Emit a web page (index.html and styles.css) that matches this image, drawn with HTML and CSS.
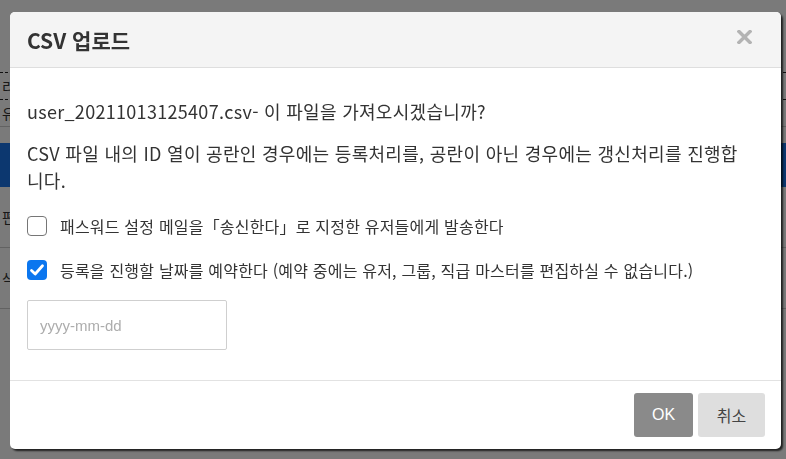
FILE: index.html
```html
<!DOCTYPE html>
<html lang="ko">
<head>
    <meta charset="UTF-8">
    <meta name="viewport" content="width=device-width, initial-scale=1.0">
    <title>CSV 업로드</title>
    <link rel="stylesheet" href="styles.css">
</head>
<body>
    <div class="page">
        <div class="page-row page-row-dashed">리스트</div>
        <div class="page-row">유저</div>
        <div class="page-bar"></div>
        <div class="page-row page-row-tall">편집</div>
        <div class="page-row page-row-tall">삭제</div>
    </div>

    <div class="backdrop">
        <div class="modal">
            <div class="modal-header">
                <h2 class="modal-title">CSV 업로드</h2>
                <button class="modal-close" type="button" aria-label="닫기">
                    <svg width="15" height="14" viewBox="0 0 15 14">
                        <path d="M2 1.5 L13 12.5 M13 1.5 L2 12.5" stroke="#b3b3b3" stroke-width="3.4" stroke-linecap="square"/>
                    </svg>
                </button>
            </div>
            <div class="modal-body">
                <p class="msg">user_20211013125407.csv- 이 파일을 가져오시겠습니까?</p>
                <p class="msg msg-gap">CSV 파일 내의 ID 열이 공란인 경우에는 등록처리를, 공란이 아닌 경우에는 갱신처리를 진행합니다.</p>
                <label class="check-row check-first">
                    <input type="checkbox">
                    <span>패스워드 설정 메일을「송신한다」로 지정한 유저들에게 발송한다</span>
                </label>
                <label class="check-row">
                    <input type="checkbox" checked>
                    <span>등록을 진행할 날짜를 예약한다 (예약 중에는 유저, 그룹, 직급 마스터를 편집하실 수 없습니다.)</span>
                </label>
                <input class="date-input" type="text" placeholder="yyyy-mm-dd">
            </div>
            <div class="modal-footer">
                <button class="btn btn-ok" type="button">OK</button>
                <button class="btn btn-cancel" type="button">취소</button>
            </div>
        </div>
    </div>
</body>
</html>
```

FILE: styles.css
```css
body, html {
    margin: 0;
    padding: 0;
    height: 100%;
    overflow: hidden;
    font-family: "Noto Sans CJK KR", "Noto Sans", sans-serif;
    color: #333;
    background-color: #fff;
}
.page {
    padding-top: 72px;
}
.page-row {
    height: 26px;
    font-size: 14px;
    line-height: 26px;
    padding-left: 2px;
    border-bottom: 1px solid #ccc;
}
.page-row-dashed {
    border-top: 1px dashed #222;
    border-bottom: 1px dashed #222;
}
.page-row-tall {
    height: 60px;
    line-height: 60px;
}
.page-bar {
    height: 44px;
    margin-top: 16px;
    background-color: #1b74e8;
}
.backdrop {
    position: fixed;
    top: 0;
    left: 0;
    width: 100%;
    height: 100%;
    background-color: rgba(0, 0, 0, 0.52);
}
.modal {
    position: absolute;
    top: 12px;
    left: 10px;
    width: 771px;
    box-sizing: border-box;
    background-color: #fff;
    border-radius: 5px;
    overflow: hidden;
    box-shadow: 2px 2px 2px rgba(0, 0, 0, 0.75);
}
.modal-header {
    display: flex;
    align-items: center;
    justify-content: space-between;
    height: 55px;
    padding: 0 29px 0 17px;
    background-color: #f4f4f4;
    border-bottom: 1px solid #dedede;
}
.modal-title {
    margin: 0;
    font-size: 21px;
    font-weight: bold;
    color: #333;
}
.modal-close {
    border: none;
    background: none;
    padding: 0;
    margin-top: -6px;
    display: flex;
    cursor: pointer;
}
.modal-body {
    padding: 30px 34px 30px 17px;
}
.msg {
    margin: 0;
    font-size: 18px;
    line-height: 27px;
    letter-spacing: 0.3px;
    color: #333;
}
.msg-gap {
    margin-top: 15px;
}
.check-row {
    display: flex;
    align-items: center;
    gap: 13px;
    height: 20px;
    font-size: 16px;
    letter-spacing: 0.2px;
    color: #333;
    margin-top: 24px;
}
.check-first {
    margin-top: 22px;
}
.check-row input {
    appearance: none;
    width: 20px;
    height: 20px;
    margin: 0;
    flex-shrink: 0;
    box-sizing: border-box;
    border: 1.5px solid #767676;
    border-radius: 4px;
    background-color: #fff;
}
.check-row input:checked {
    border: none;
    background-color: #0b76ef;
    background-image: url("data:image/svg+xml;utf8,<svg xmlns='http://www.w3.org/2000/svg' viewBox='0 0 20 20'><path d='M4.5 10.5 L8.2 14 L15.5 5.8' fill='none' stroke='white' stroke-width='2.8' stroke-linecap='round' stroke-linejoin='round'/></svg>");
    background-size: 20px 20px;
}
.date-input {
    display: block;
    margin-top: 20px;
    width: 200px;
    height: 50px;
    box-sizing: border-box;
    padding: 0 12px;
    border: 1px solid #cfcfcf;
    border-radius: 2px;
    font-family: "Liberation Sans", Arial, sans-serif;
    font-size: 15px;
    color: #333;
}
.date-input::placeholder {
    color: #adadad;
}
.modal-footer {
    display: flex;
    justify-content: flex-end;
    gap: 5px;
    padding: 12px 16px 12px 17px;
    border-top: 1px solid #e2e2e2;
}
.btn {
    height: 44px;
    border: none;
    border-radius: 3px;
    font-size: 16px;
    cursor: pointer;
}
.btn-ok {
    width: 59px;
    background-color: #8a8a8a;
    color: #fff;
    font-family: "Liberation Sans", Arial, sans-serif;
}
.btn-cancel {
    width: 67px;
    background-color: #dedede;
    color: #444;
    font-family: "Noto Sans CJK KR", sans-serif;
}
```
